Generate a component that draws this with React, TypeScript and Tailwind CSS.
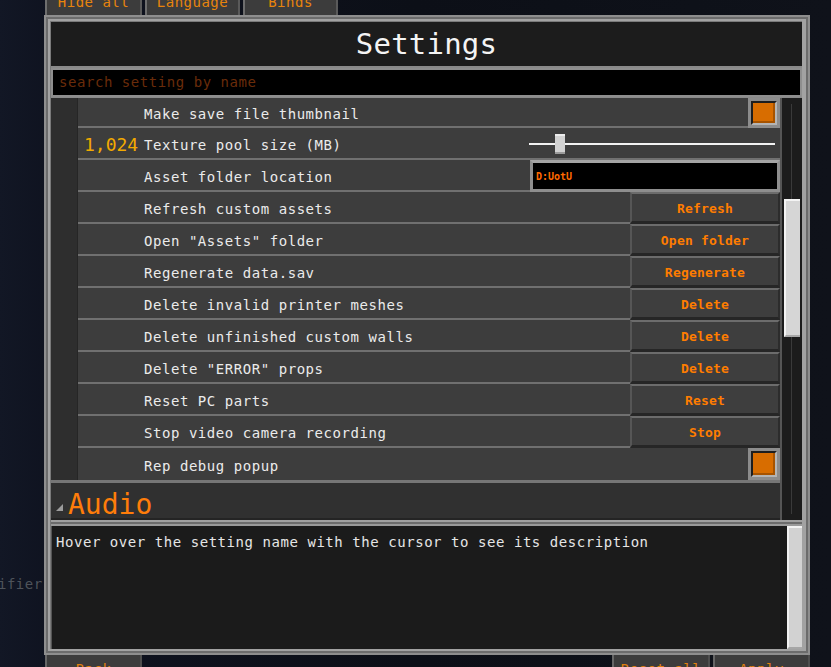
import React from "react";

type Ctl =
  | { kind: "check" }
  | { kind: "slider" }
  | { kind: "field"; value: string }
  | { kind: "button"; text: string };

type Row = { label: string; value?: string; ctl: Ctl };

const rows: Row[] = [
  { label: "Make save file thumbnail", ctl: { kind: "check" } },
  { label: "Texture pool size (MB)", value: "1,024", ctl: { kind: "slider" } },
  { label: "Asset folder location", ctl: { kind: "field", value: "D:UotU" } },
  { label: "Refresh custom assets", ctl: { kind: "button", text: "Refresh" } },
  { label: 'Open "Assets" folder', ctl: { kind: "button", text: "Open folder" } },
  { label: "Regenerate data.sav", ctl: { kind: "button", text: "Regenerate" } },
  { label: "Delete invalid printer meshes", ctl: { kind: "button", text: "Delete" } },
  { label: "Delete unfinished custom walls", ctl: { kind: "button", text: "Delete" } },
  { label: 'Delete "ERROR" props', ctl: { kind: "button", text: "Delete" } },
  { label: "Reset PC parts", ctl: { kind: "button", text: "Reset" } },
  { label: "Stop video camera recording", ctl: { kind: "button", text: "Stop" } },
  { label: "Rep debug popup", ctl: { kind: "check" } },
];

const mono = "font-['DejaVu_Sans_Mono',monospace]";

function Control({ ctl }: { ctl: Ctl }) {
  if (ctl.kind === "check") {
    return (
      <div className="w-[32px] h-full bg-[#8c8c8c] p-[3px]">
        <div className="w-full h-full border-t-2 border-l-2 border-[#1e1e1e] border-b-2 border-r-2 border-b-[#b4b4b4] border-r-[#b4b4b4]">
          <div className="w-full h-full bg-[#d86d00] border-b-2 border-r-2 border-[#a65300]" />
        </div>
      </div>
    );
  }
  if (ctl.kind === "slider") {
    return (
      <div className="w-[251px] h-full border-b-2 border-[#707070] flex items-center pr-[5px] pt-[2px]">
        <div className="w-[26px] h-[2px] bg-[#f2f2f2]" />
        <div className="w-[10px] h-[20px] bg-[#d2d2d2] border-t-2 border-[#ececec] border-b-2 border-b-[#9a9a9a]" />
        <div className="flex-1 h-[2px] bg-[#f2f2f2]" />
      </div>
    );
  }
  if (ctl.kind === "field") {
    return (
      <div className="w-[250px] h-full border-[3px] border-[#8e8e8e] border-t-[#a4a4a4] bg-black flex items-center pl-[3px] pt-px">
        <span className={`${mono} font-bold text-[10px] text-[#ff6a00]`}>{ctl.value}</span>
      </div>
    );
  }
  return (
    <div className="w-[150px] h-full bg-[#3e3e3e] border-t-2 border-t-[#6c6c6c] border-l-2 border-l-[#565656] border-b-[3px] border-b-[#262626] border-r-2 border-r-[#2c2c2c] flex items-center justify-center pt-[3px]">
      <span className={`${mono} font-bold text-[13px] tracking-[0.2px] text-[#ff7d00]`}>{ctl.text}</span>
    </div>
  );
}

function SettingRow({ row, first, last }: { row: Row; first: boolean; last: boolean }) {
  return (
    <div className={`flex items-stretch ${first ? "h-[30px]" : "h-[32px]"}`}>
      <div
        className={`flex-1 flex items-center pt-[4px] ${last ? "" : "border-b-2 border-[#707070]"}`}
      >
        <div className="w-[66px] pl-[6px]">
          {row.value && (
            <span className={`${mono} text-[18px] leading-none text-[#f2aa00]`}>{row.value}</span>
          )}
        </div>
        <span className={`${mono} text-[14px] tracking-[0.55px] text-[#ebebeb]`}>{row.label}</span>
      </div>
      <Control ctl={row.ctl} />
    </div>
  );
}

function Tab({ label, w }: { label: string; w: string }) {
  return (
    <div className={`${w} h-[15px] bg-[#3c3c3c] border-l-2 border-l-[#6e6e6e] border-r-2 border-r-[#5a5a5a] flex justify-center overflow-hidden`}>
      <span className={`${mono} text-[14px] tracking-[0.5px] text-[#e8840c] leading-none -mt-[5px]`}>{label}</span>
    </div>
  );
}

function BottomTab({ label, w }: { label: string; w: string }) {
  return (
    <div className={`${w} h-[12px] bg-[#3c3c3c] border-l-2 border-l-[#666] border-r-2 border-r-[#4e4e4e] flex justify-center overflow-hidden`}>
      <span className={`${mono} text-[14px] tracking-[0.5px] text-[#e0800e] leading-none mt-[7px]`}>{label}</span>
    </div>
  );
}

export default function App() {
  return (
    <div className="relative w-[831px] h-[667px] overflow-hidden bg-[linear-gradient(90deg,#121725_0%,#0f1320_6%,#0c0f17_50%,#0f121a_100%)]">
      {/* background text behind the panel */}
      <span className={`absolute left-[-2px] top-[574px] ${mono} text-[14px] tracking-[0.5px] text-[#4e535a]`}>
        ifier
      </span>

      {/* top tabs */}
      <div className="relative flex gap-[3px] pl-[45px] h-[15px]">
        <Tab label="Hide all" w="w-[97px]" />
        <Tab label="Language" w="w-[95px]" />
        <Tab label="Binds" w="w-[95px]" />
      </div>

      {/* panel */}
      <div className="relative ml-[44px] w-[766px] h-[640px] bg-[#8e8e8e] p-[2px]">
        <div className="w-full h-full bg-[#6c6c6c] p-[2px]">
          <div className="w-full h-full bg-[#a2a2a2] pt-[2px] pl-[2px] pr-[4px] pb-[2px]">
            <div className="w-full h-full bg-[#7a7a7a] pt-px pl-px flex flex-col">
              {/* title */}
              <div className="h-[44px] bg-[#1c1c1c] flex items-center justify-center">
                <span className={`${mono} text-[29px] tracking-[0.2px] text-[#f4f4f4] leading-none`}>Settings</span>
              </div>
              <div className="h-[2px] bg-[#8a8a8a]" />
              {/* search */}
              <div className="h-[29px] bg-[#8e8e8e] p-[2px]">
                <div className="w-full h-full bg-black flex items-center pl-[6px]">
                  <span className={`${mono} text-[14px] tracking-[0.55px] text-[#6a2c0a]`}>search setting by name</span>
                </div>
              </div>
              <div className="h-px bg-[#8a8a8a]" />

              {/* list + audio + scrollbar */}
              <div className="flex h-[422px]">
                <div className="flex-1 flex flex-col">
                  <div className="flex h-[382px]">
                    <div className="w-[27px] bg-[#2e2e2e] border-r border-[#262626]" />
                    <div className="flex-1 bg-[#3d3d3d] flex flex-col">
                      {rows.map((r, i) => (
                        <SettingRow key={i} row={r} first={i === 0} last={i === rows.length - 1} />
                      ))}
                    </div>
                  </div>
                  <div className="h-[3px] bg-[#767676]" />
                  <div className="h-[37px] bg-[#303030] border-b-2 border-[#242424] flex items-center pl-[5px] pt-[9px] gap-[5px]">
                    <svg width="7" height="7" viewBox="0 0 7 7" className="mt-[5px]">
                      <polygon points="7,0 7,7 0,7" fill="#9c9c9c" />
                    </svg>
                    <span className={`${mono} text-[28px] leading-none text-[#ff7d0a]`}>Audio</span>
                  </div>
                </div>
                {/* scrollbar */}
                <div className="relative w-[22px] bg-[#1c1c1c] border-l-2 border-[#555]">
                  <div className="absolute left-[9px] top-[6px] bottom-[6px] w-px bg-[#3a3a3a]" />
                  <div className="absolute left-[2px] top-[101px] w-[16px] h-[138px] bg-[#d6d6d6] border-t-2 border-l-2 border-[#f4f4f4] border-b-2 border-b-[#a8a8a8]" />
                </div>
              </div>

              <div className="h-[2px] bg-[#a0a0a0]" />
              <div className="h-[2px] bg-[#6c6c6c]" />
              <div className="h-[2px] bg-[#9a9a9a]" />

              {/* description */}
              <div className="flex-1 bg-[#1b1b1b] flex border-l border-[#555]">
                <div className="flex-1 pl-[4px] pt-[3px]">
                  <span className={`${mono} text-[14px] tracking-[0.55px] text-[#e6e6e6]`}>
                    Hover over the setting name with the cursor to see its description
                  </span>
                </div>
                <div className="w-[15px] bg-[#d2d2d2] border-t-2 border-l-2 border-[#f2f2f2] border-b-2 border-b-[#a6a6a6]" />
              </div>
            </div>
          </div>
        </div>
      </div>

      {/* bottom buttons */}
      <div className="relative flex pl-[45px]">
        <BottomTab label="Back" w="w-[97px]" />
        <div className="flex-1" />
        <div className="flex gap-[3px] pr-[21px]">
          <BottomTab label="Reset all" w="w-[98px]" />
          <BottomTab label="Apply" w="w-[97px]" />
        </div>
      </div>
    </div>
  );
}
